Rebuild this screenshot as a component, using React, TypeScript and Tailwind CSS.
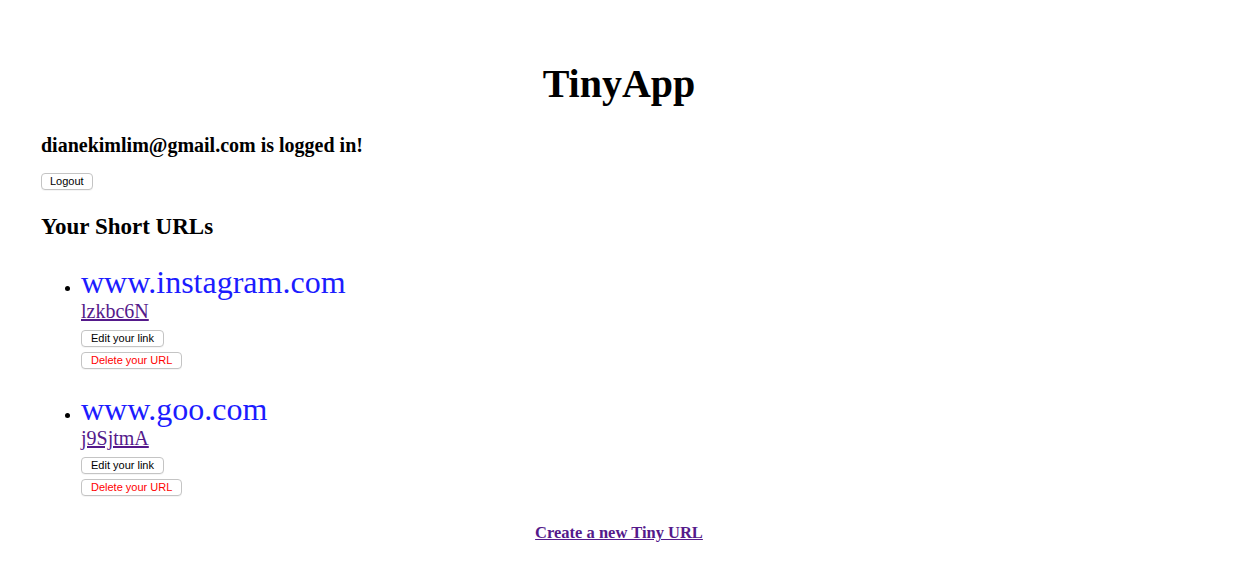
import React from 'react';

type ShortUrl = { id: string; longUrl: string };

const urls: ShortUrl[] = [
  { id: 'lzkbc6N', longUrl: 'www.instagram.com' },
  { id: 'j9SjtmA', longUrl: 'www.goo.com' },
];

const btn =
  "block rounded-[4px] border border-[#c4c4c4] bg-white py-[1px] font-['Liberation_Sans',Arial,sans-serif] text-[11px] leading-[13px] shadow-[0_1px_0_rgba(0,0,0,0.04)]";

const App: React.FC = () => {
  return (
    <div className="min-h-screen bg-white pl-[41px] pr-[36px] pt-[62px] font-['Liberation_Serif','Times_New_Roman',serif] text-black">
      <h1 className="text-center text-[40px] font-bold leading-[44px]">TinyApp</h1>

      <h3 className="mt-[28px] text-[20px] font-bold leading-[22px]">
        dianekimlim@gmail.com is logged in!
      </h3>
      <button className={`${btn} mt-[17px] px-[8px] text-black`}>Logout</button>

      <h2 className="mt-[24px] text-[23px] font-bold leading-[26px]">Your Short URLs</h2>

      <ul className="mt-[24px] list-disc pl-10 text-base">
        {urls.map((u, i) => (
          <li key={u.id} className={i > 0 ? 'mt-[22px]' : ''}>
            <a href="#" className="block text-[32px] leading-[36px] text-[#1c1cff]">
              {u.longUrl}
            </a>
            <a href="#" className="block w-fit text-[20px] leading-[22px] text-[#551a8b] underline">
              {u.id}
            </a>
            <button className={`${btn} mt-[8px] px-[9px] text-black`}>Edit your link</button>
            <button className={`${btn} mt-[5px] px-[9px] text-[#ff0000]`}>Delete your URL</button>
          </li>
        ))}
      </ul>

      <div className="mt-[28px] text-center text-[16.5px] leading-[18px]">
        <a href="#" className="font-bold text-[#551a8b] underline">
          Create a new Tiny URL
        </a>
      </div>
    </div>
  );
};

export default App;
